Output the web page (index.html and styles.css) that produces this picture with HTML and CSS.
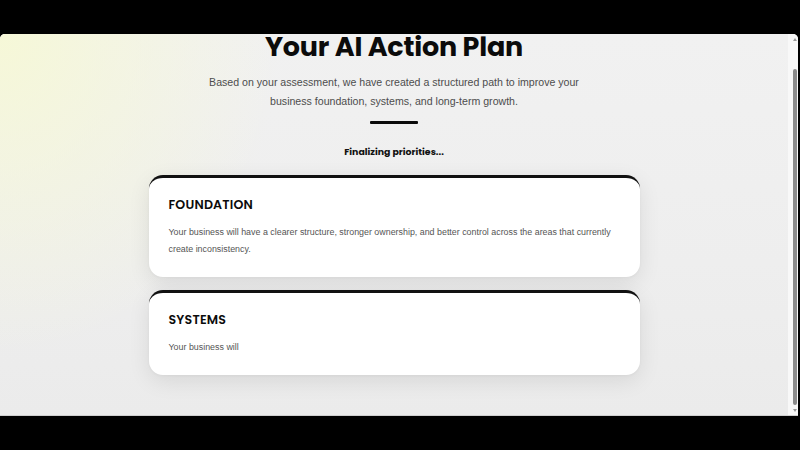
FILE: index.html
```html
<!DOCTYPE html>
<html lang="en">
<head>
<meta charset="utf-8">
<title>Your AI Action Plan</title>
<link rel="stylesheet" href="styles.css">
</head>
<body>
  <div class="window">
    <main class="page">
      <h1 class="title">Your AI Action Plan</h1>
      <p class="intro">Based on your assessment, we have created a structured path to improve your<br>business foundation, systems, and long-term growth.</p>
      <div class="rule"></div>
      <p class="status">Finalizing priorities...</p>
      <section class="plan">
        <article class="card">
          <h2 class="card-title">FOUNDATION</h2>
          <p class="card-text">Your business will have a clearer structure, stronger ownership, and better control across the areas that currently create inconsistency.</p>
        </article>
        <article class="card">
          <h2 class="card-title">SYSTEMS</h2>
          <p class="card-text">Your business will</p>
        </article>
      </section>
    </main>
    <div class="scrollbar">
      <span class="arrow arrow-up"></span>
      <span class="thumb"></span>
      <span class="arrow arrow-down"></span>
    </div>
  </div>
</body>
</html>
```

FILE: styles.css
```css
* {
  box-sizing: border-box;
}

html,
body {
  margin: 0;
  height: 100%;
  background: #000;
  overflow: hidden;
}

body {
  padding-top: 34px;
}

.window {
  width: 798px;
  height: 382px;
  display: flex;
  overflow: hidden;
  border-radius: 5px 5px 0 0;
  border-bottom: 1px solid #cfcfcf;
  background: #efefef;
}

.page {
  flex: 1;
  display: flex;
  flex-direction: column;
  align-items: center;
  overflow: hidden;
  background:
    radial-gradient(ellipse 280px 320px at 0 0, rgba(246, 248, 214, 0.95), rgba(246, 248, 214, 0) 100%),
    linear-gradient(180deg, #f1f1f1 0%, #eeeeee 60%, #ebebeb 100%);
}

.title {
  margin: -4px 0 0;
  font-family: "Poppins", "Inter", sans-serif;
  font-weight: 700;
  font-size: 27px;
  line-height: 34px;
  letter-spacing: -0.2px;
  color: #0b0b0b;
}

.intro {
  margin: 9px 0 0;
  font-family: "Liberation Sans", Arial, sans-serif;
  font-size: 10.6px;
  line-height: 19px;
  color: #4d4d4d;
  text-align: center;
}

.rule {
  width: 48px;
  height: 3px;
  margin-top: 10px;
  background: #0b0b0b;
  border-radius: 1px;
}

.status {
  margin: 19px 0 0;
  font-family: "Poppins", "Inter", sans-serif;
  font-weight: 700;
  font-size: 9.4px;
  line-height: 17px;
  color: #111;
}

.plan {
  width: 491px;
  margin-top: 15px;
  display: flex;
  flex-direction: column;
  gap: 13px;
}

.card {
  background: #fff;
  border-top: 3px solid #111;
  border-radius: 14px;
  padding: 18px 20px 19px;
  box-shadow: 0 6px 22px rgba(0, 0, 0, 0.09), 0 1px 3px rgba(0, 0, 0, 0.04);
}

.card-title {
  margin: 0;
  font-family: "Poppins", "Inter", sans-serif;
  font-weight: 600;
  font-size: 12.6px;
  line-height: 18px;
  letter-spacing: 0.2px;
  color: #0b0b0b;
}

.card-text {
  margin: 10px 0 0;
  font-family: "Liberation Sans", Arial, sans-serif;
  font-size: 8.9px;
  line-height: 17px;
  color: #555;
}

.scrollbar {
  width: 10px;
  display: flex;
  flex-direction: column;
  align-items: center;
  padding: 2px 0 2px 3px;
  background: #f8f8f8;
}

.thumb {
  flex: 1;
  width: 4px;
  margin: 28px 0 4px;
  border-radius: 2px;
  background: #8b8b8b;
}

.arrow {
  width: 0;
  height: 0;
  border-left: 2.5px solid transparent;
  border-right: 2.5px solid transparent;
}

.arrow-up {
  margin-top: 2px;
  border-bottom: 3px solid #9a9a9a;
}

.arrow-down {
  margin-bottom: 1px;
  border-top: 3px solid #9a9a9a;
}
```
